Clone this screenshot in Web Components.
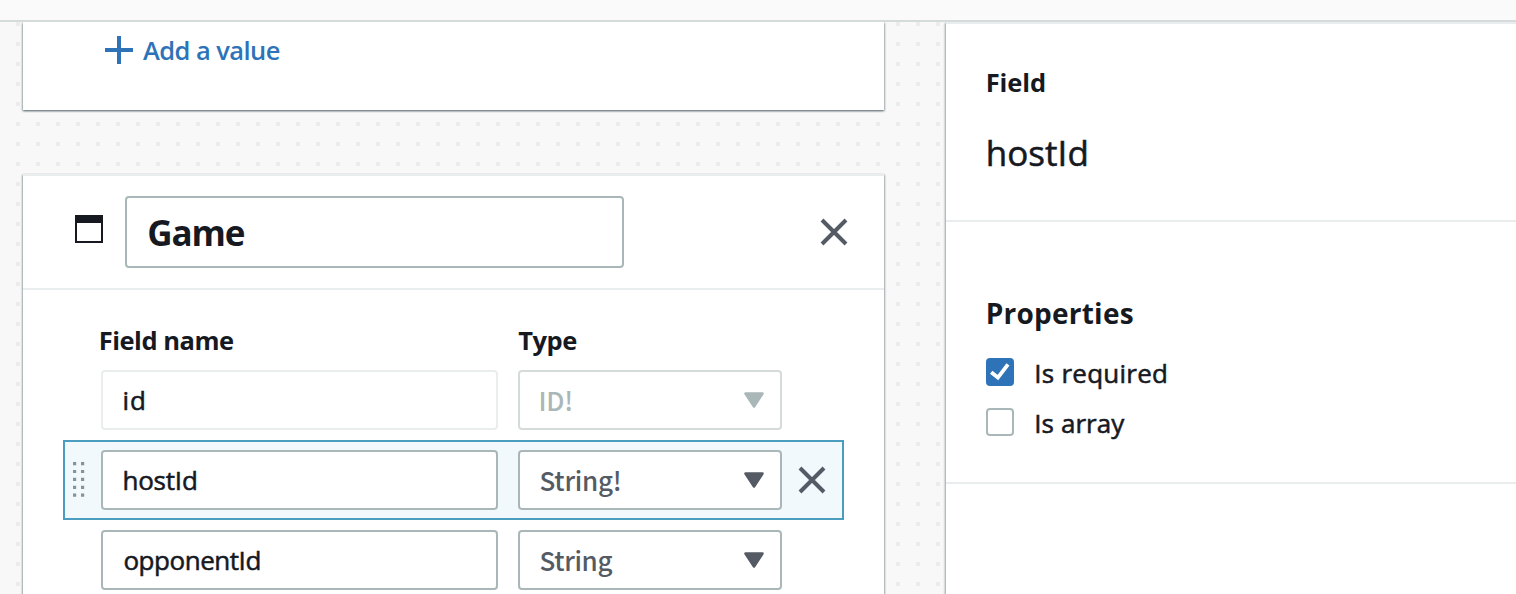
<!DOCTYPE html>
<html lang="en">
<head>
<meta charset="utf-8">
<title>Data model</title>
<style>
html, body { margin: 0; height: 100%; overflow: hidden; }
body { font-family: "Open Sans", sans-serif; font-size: 26px; color: #16191f; background: #f8f8f8; }
</style>
</head>
<body>
<model-editor>
  <model-card slot="canvas" class="enum"><add-link><ui-text span="136.7" size="25.5" weight="600">Add a value</ui-text></add-link></model-card>
  <model-card slot="canvas" class="model">
    <card-header><ui-text span="95.5" size="35" weight="700">Game</ui-text></card-header>
    <field-labels>
      <ui-text slot="name" span="132.3" size="25.5" weight="700">Field name</ui-text>
      <ui-text slot="type" span="58" size="25.5" weight="700">Type</ui-text>
    </field-labels>
    <field-row disabled><ui-text slot="name" span="19.7">id</ui-text><ui-text slot="type" span="30.7" weight="500" medium>ID!</ui-text></field-row>
    <field-row selected><ui-text slot="name" span="71.5">hostId</ui-text><ui-text slot="type" span="79.3" weight="500" medium>String!</ui-text></field-row>
    <field-row><ui-text slot="name" span="135">opponentId</ui-text><ui-text slot="type" span="72" weight="500" medium>String</ui-text></field-row>
  </model-card>
  <side-panel slot="panel">
    <panel-section class="summary">
      <ui-text class="label" span="57.3" size="25.5" weight="700">Field</ui-text>
      <ui-text class="value" span="98.7" size="35">hostId</ui-text>
    </panel-section>
    <panel-section class="props">
      <ui-text class="label" span="145" size="28" weight="700">Properties</ui-text>
      <check-option checked><ui-text span="129.8">Is required</ui-text></check-option>
      <check-option><ui-text span="89">Is array</ui-text></check-option>
    </panel-section>
  </side-panel>
</model-editor>

<script>
const define = (name, html, setup) => customElements.define(name, class extends HTMLElement {
  constructor() {
    super();
    this.attachShadow({ mode: 'open' }).innerHTML = html;
  }
  connectedCallback() { if (setup) setup(this); }
});

const pen = document.createElement('canvas').getContext('2d');

// Text whose inked width is set by `span`; tracking takes up the difference.
define('ui-text', `<style>
  :host { display: block; white-space: pre; line-height: 40px; }
  :host([medium]) { font-family: "Noto Sans CJK SC", sans-serif; padding-bottom: .03em; }
  :host(:not([weight])) { -webkit-text-stroke: .55px currentColor; }
</style><slot></slot>`, el => {
  const size = +(el.getAttribute('size') || 26);
  const weight = el.getAttribute('weight') || 400;
  const family = el.hasAttribute('medium') ? 'Noto Sans CJK SC' : 'Open Sans';
  const text = el.textContent;
  pen.font = `${weight} ${size}px "${family}"`;
  const m = pen.measureText(text);
  const ink = m.actualBoundingBoxRight + m.actualBoundingBoxLeft;
  el.style.fontSize = size + 'px';
  el.style.fontWeight = weight;
  el.style.letterSpacing = ((el.getAttribute('span') - ink) / (text.length - 1)).toFixed(3) + 'px';
  el.style.textIndent = m.actualBoundingBoxLeft.toFixed(2) + 'px';
});

define('model-editor', `<style>
  :host { display: flex; flex-direction: column; height: 594px; }
  header { flex: none; height: 20px; background: #fafafa; border-bottom: 2px solid #d5dbdb; }
  main { flex: 1; min-height: 0; display: flex; overflow: hidden;
    background: #f8f8f8 conic-gradient(from 270deg at 4px 4px, #ececec 90deg, transparent 0) 16px 0 / 20px 20px; }
  .canvas { width: 946px; box-sizing: border-box; padding: 0 62px 0 22.5px; display: flex; flex-direction: column; gap: 64px; }
  .panel { flex: 1; display: flex; }
</style>
<header></header>
<main><div class="canvas"><slot name="canvas"></slot></div><div class="panel"><slot name="panel"></slot></div></main>`);

define('model-card', `<style>
  :host { display: block; box-sizing: border-box; flex: none; background: #fff;
    box-shadow: 0 1px 2px rgba(0,28,36,.45), 1px 1px 2px rgba(0,28,36,.2), -1px 1px 2px rgba(0,28,36,.2); }
  :host(.enum) { height: 88px; padding: 8px 0 0 82.5px; }
  :host(.model) { height: 460px; border-top: 2px solid #eaeded; }
</style><slot></slot>`);

define('add-link', `<style>
  :host { display: flex; align-items: center; height: 40px; color: #2e73b8; }
  svg { flex: none; width: 28px; height: 28px; margin-right: 10px; }
</style>
<svg viewBox="0 0 28 28" fill="none" stroke="currentColor" stroke-width="4"><path d="M14 0v28M0 14h28"/></svg><slot></slot>`);

define('close-icon', `<style>
  :host { display: block; width: 28px; height: 28px; color: #545b64; }
  svg { display: block; }
</style>
<svg width="28" height="28" viewBox="0 0 28 28" fill="none" stroke="currentColor" stroke-width="4"><path d="M2 2l24 24M26 2L2 26"/></svg>`);

define('card-header', `<style>
  :host { display: flex; box-sizing: border-box; height: 114px; border-bottom: 2px solid #eaeded; padding: 20px 36px 0 52.5px; }
  .icon { flex: none; width: 28px; height: 28px; margin-top: 19px; }
  .name { box-sizing: border-box; width: 499px; height: 72px; margin: 0 auto 0 22px; padding: 1px 0 0 22.2px; display: flex; align-items: center; border: 2px solid #aab7b8; border-radius: 4px; }
  close-icon { margin-top: 22px; }
</style>
<svg class="icon" viewBox="0 0 28 28"><path fill="#16191f" d="M0 0h28v28H0zM2 8v18h24V8z" fill-rule="evenodd"/></svg>
<div class="name"><slot></slot></div><close-icon></close-icon>`);

define('field-labels', `<style>
  :host { display: grid; grid-template-columns: 417.6px 1fr; padding: 30px 0 0 78.2px; height: 40px; align-items: center; }
</style><slot name="name"></slot><slot name="type"></slot>`);

define('field-row', `<style>
  :host { display: flex; align-items: center; box-sizing: border-box; width: 781px; height: 80px; margin-left: 40.5px; border: 2px solid transparent; }
  :host([selected]) { background: #f1f9fd; border-color: #4b9dc0; }
  .grip { flex: none; width: 12px; height: 36px; margin: 0 16px 0 8px; visibility: hidden; }
  .box { box-sizing: border-box; height: 60px; flex: none; display: flex; align-items: center; justify-content: space-between; background: #fff; border: 2px solid #aab7b8; border-radius: 4px; }
  .name { width: 397px; padding-left: 21.4px; margin-right: 20px; }
  .type { width: 264px; padding: 0 16px 0 20.5px; color: #545b64; }
  close-icon { visibility: hidden; margin-left: 16px; }
  :host([selected]) .grip, :host([selected]) close-icon { visibility: visible; }
  :host([disabled]) .name { border-color: #eaeded; }
  :host([disabled]) .type { border-color: #d5dbdb; color: #aab7b8; }
</style>
<svg class="grip" viewBox="0 0 12 36" fill="none" stroke="#879196" stroke-width="3.2" stroke-dasharray="3.2 4.7"><path d="M1.6 0v35.5M9.6 0v35.5"/></svg>
<div class="box name"><slot name="name"></slot></div>
<div class="box type"><slot name="type"></slot>
<svg width="20" height="16" viewBox="0 0 20 16"><path d="M1.5 1.5h17L10 14.5z" fill="currentColor" stroke="currentColor" stroke-width="2.6" stroke-linejoin="round"/></svg></div>
<close-icon></close-icon>`);

define('side-panel', `<style>
  :host { display: block; flex: 1; background: #fff; border-top: 2px solid #eaeded; box-shadow: -1px 1px 2px rgba(0,28,36,.4); }
</style><slot></slot>`);

define('panel-section', `<style>
  :host { display: block; box-sizing: border-box; padding-left: 41.7px; border-bottom: 2px solid #eaeded; }
  :host(.summary) { height: 198px; padding-top: 38px; }
  :host(.props) { height: 262px; padding-top: 71px; }
  ::slotted(.label) { height: 40px; }
  ::slotted(.value) { margin-top: 31px; }
  :host(.props) ::slotted(.label) { margin-bottom: 14px; }
</style><slot></slot>`);

define('check-option', `<style>
  :host { display: flex; align-items: center; height: 50px; margin-left: -1.7px; }
  .box { box-sizing: border-box; width: 28px; height: 28px; margin-right: 22.3px; border: 2px solid #aab7b8; border-radius: 4px; background: #fff; flex: none; }
  svg { display: none; margin: -2px; }
  :host([checked]) .box { background: #2e73b8; border-color: #2e73b8; }
  :host([checked]) svg { display: block; }
  ::slotted(ui-text) { padding-top: 1px; }
</style>
<div class="box"><svg width="28" height="28" viewBox="0 0 28 28" fill="none" stroke="#fff" stroke-width="3.8"><path d="M5.2 14.2l6.7 5.4L22 6.3"/></svg></div><slot></slot>`);
</script>
</body>
</html>
